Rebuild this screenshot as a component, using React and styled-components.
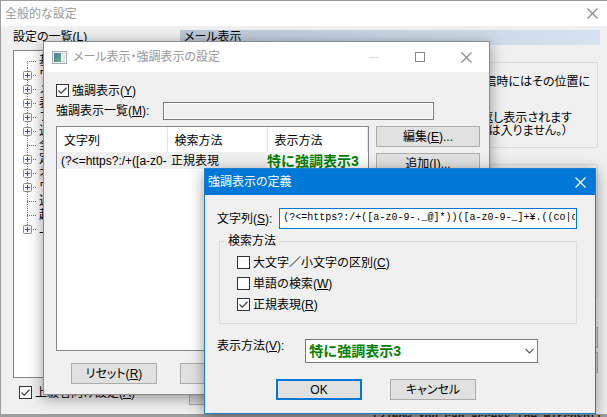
import React, { useState } from "react";

import styled, { createGlobalStyle } from "styled-components";

const GlobalStyle = createGlobalStyle`
  * {
    box-sizing: border-box;
  }

  html, body, #root {
    height: 100%;
  }

  body {
    margin: 0;
    overflow: hidden;
    font-family: "Liberation Sans", "Noto Sans CJK JP", sans-serif;
    font-size: 12px;
    line-height: 14px;
    color: #000;
  }

  button, input, select {
    font: inherit;
    color: inherit;
  }
`;

const Desktop = styled.div`
  position: relative;
  height: 100%;
  overflow: hidden;
  background: #9c9c9c;
`;

const EditorText = styled.div`
  position: absolute;
  left: 372px;
  bottom: -7px;
  font-family: "Liberation Mono", monospace;
  font-size: 11px;
  font-weight: bold;
  white-space: nowrap;
  color: #222;
`;

const Window = styled.section`
  position: absolute;
  display: flex;
  flex-direction: column;
  background: #f0f0f0;
  border: 1px solid ${(props) => (props.$active ? "#1a7fd0" : "#8c8c8c")};
  box-shadow: 0 3px 14px rgba(0, 0, 0, 0.4);
`;

const SettingsWindow = styled(Window)`
  top: 1px;
  left: 0;
  right: -4px;
  bottom: 2px;
  border-color: #a0a0a0;
  border-top: none;
  box-shadow: none;
`;

const HighlightWindow = styled(Window)`
  top: 41px;
  left: 43px;
  width: 447px;
`;

const DefinitionWindow = styled(Window)`
  top: 168px;
  left: 204px;
  width: 392px;
`;

const TitleBar = styled.header`
  display: flex;
  align-items: center;
  flex: none;
  height: ${(props) => props.$height}px;
  padding-left: ${(props) => props.$indent}px;
  background: ${(props) => (props.$active ? "#0078d7" : "#fff")};
  color: ${(props) => (props.$active ? "#fff" : "#999")};
`;

const Title = styled.h1`
  flex: 1;
  margin: 0;
  font-size: 12px;
  font-weight: normal;
  font-feature-settings: "palt";
  white-space: nowrap;
`;

const TitleButton = styled.button`
  display: flex;
  align-items: center;
  justify-content: center;
  width: ${(props) => props.$width || 46}px;
  height: 100%;
  padding: 0;
  border: none;
  background: none;
`;

const AppIcon = styled.svg`
  margin-right: 6px;
`;

const Label = styled.label`
  white-space: nowrap;
  font-feature-settings: "palt" ${(props) => (props.$kana ? 1 : 0)};
`;

const CheckRow = styled.label`
  display: flex;
  align-items: center;
  gap: 3px;
  height: 13px;
  white-space: nowrap;
`;

const CheckInput = styled.input`
  appearance: none;
  flex: none;
  width: 13px;
  height: 13px;
  margin: 0;
  border: 1px solid #333;
  background: #fff;

  &:checked {
    background: #fff
      url("data:image/svg+xml,%3Csvg xmlns='http://www.w3.org/2000/svg' viewBox='0 0 11 11'%3E%3Cpath d='M1.5 5.5l2.7 2.7L9.5 2.8' fill='none' stroke='%23444' stroke-width='1.3'/%3E%3C/svg%3E");
  }
`;

const PushButton = styled.button`
  width: ${(props) => props.$width || 86}px;
  height: 21px;
  padding: 0;
  border: ${(props) => (props.$primary ? "2px solid #0078d7" : "1px solid #adadad")};
  background: #e1e1e1;
  font-feature-settings: "palt";
  white-space: nowrap;
`;

/* outer settings window */

const SettingsBody = styled.div`
  display: flex;
  flex: 1;
  min-height: 0;
  padding: 4px 10px 9px 12px;
`;

const TreePane = styled.div`
  display: flex;
  flex-direction: column;
  width: 167px;
`;

const Tree = styled.ul`
  flex: 1;
  min-height: 0;
  margin: 6px 8px 8px 0;
  padding: 3px 0 0 9px;
  border: 1px solid #828790;
  background: #fff;
  list-style: none;
`;

const TreeItem = styled.li`
  display: flex;
  align-items: center;
  height: 14px;
  white-space: nowrap;
`;

const TreeText = styled.span`
  background: ${(props) => (props.$selected ? "#eee" : "none")};
`;

const TreeCheck = styled.div`
  padding: 0 0 6px 6px;
`;

const Page = styled.div`
  display: flex;
  flex-direction: column;
  flex: 1;
  min-width: 0;
`;

const PageTitle = styled.h2`
  flex: none;
  height: 15px;
  margin: 0 0 17px;
  padding-left: 4px;
  background: linear-gradient(to right, #bac8d7, #d5e3f0);
  font-size: 12px;
  font-weight: normal;
  font-feature-settings: "palt";
`;

const PageGroup = styled.div`
  flex: none;
  height: ${(props) => props.$height}px;
  margin: 0 2px 16px 0;
  padding: 12px 0 0;
  border: 1px solid #dcdcdc;
`;

const PageText = styled.p`
  height: 13px;
  margin: 0 ${(props) => props.$end}px ${(props) => props.$gap || 0}px 0;
  text-align: right;
  font-feature-settings: "palt";
`;

const PageButtons = styled.div`
  display: flex;
  flex-direction: column;
  align-items: flex-end;
  gap: 4px;
  margin: 14px 2px 0 0;
`;

const PageFooter = styled.div`
  margin-top: auto;
  padding-left: 9px;
`;

/* highlight list window */

const HighlightBody = styled.div`
  padding: 12px 9px 10px 12px;
`;

const ListNameRow = styled.div`
  display: flex;
  align-items: center;
  gap: 14px;
  margin: 5px 0 6px;
`;

const ListName = styled.input`
  width: 271px;
  height: 18px;
  padding: 0 3px;
  border: 1px solid #7a7a7a;
  background: #f0f0f0;
  box-shadow: inset 0 0 0 1px #fff;
`;

const ListRow = styled.div`
  display: flex;
  gap: 7px;
`;

const ListBox = styled.div`
  flex: 1;
  height: 225px;
  overflow: hidden;
  border: 1px solid #828790;
  background: #fff;
`;

const Table = styled.table`
  width: 310px;
  table-layout: fixed;
  border-collapse: collapse;
  white-space: nowrap;
`;

const HeadCell = styled.th`
  height: 25px;
  padding: 2px 0 0 7px;
  border-right: 1px solid #e5e5e5;
  font-weight: normal;
  text-align: left;
`;

const Cell = styled.td`
  height: 17px;
  padding: 0 0 0 4px;
  overflow: hidden;
  background: #f0f0f0;
`;

const GreenCell = styled(Cell)`
  padding-left: 0;
  font-size: 14px;
  font-weight: bold;
  color: #008000;
  background: #fff;
`;

const SideButtons = styled.div`
  display: flex;
  flex-direction: column;
  gap: 6px;
`;

const BottomButtons = styled.div`
  display: flex;
  gap: 23px;
  padding: 12px 0 0 15px;
`;

/* definition dialog */

const DefinitionBody = styled.form`
  display: flex;
  flex-direction: column;
  padding: 13px 18px 13px 12px;
`;

const FieldRow = styled.div`
  display: flex;
  align-items: ${(props) => (props.$top ? "flex-start" : "center")};
`;

const PatternInput = styled.input`
  flex: 1;
  min-width: 0;
  height: 21px;
  margin-left: 7px;
  padding: 0 1px 2px 3px;
  border: 1px solid #0078d7;
  outline: none;
  background: #fff;
  font-family: "Liberation Mono", monospace;
  font-size: 10px;
`;

const MethodGroup = styled.fieldset`
  display: flex;
  flex-direction: column;
  gap: 8px;
  margin: 5px 0 15px 2px;
  padding: 8px 17px 12px;
  border: 1px solid #dcdcdc;
`;

const Legend = styled.legend`
  margin-left: -11px;
  padding: 0 2px;
`;

const SelectWrap = styled.div`
  position: relative;
  margin-left: 21px;
`;

const StyleSelect = styled.select`
  appearance: none;
  width: 233px;
  height: 24px;
  padding: 0 20px 0 3px;
  border: 1px solid #7a7a7a;
  border-radius: 0;
  background: #fff;
  font-size: 14px;
  font-weight: bold;
  color: #008000;
`;

const SelectArrow = styled.svg`
  position: absolute;
  right: 4px;
  top: 9px;
  pointer-events: none;
`;

const DialogButtons = styled.div`
  display: flex;
  gap: 28px;
  padding: 16px 0 0 59px;
`;

const TREE = [
  { name: "基本設定" },
  { name: "ワンタッチ", open: true },
  { name: "メール", open: true },
  { name: "表示", open: true },
  { name: "フォルダ", open: true },
  { name: "送信", open: true },
  { name: "全般" },
  { name: "定型文", open: true },
  { name: "オプション", open: true, selected: true },
  { name: "ワープロ", open: true },
  { name: "迷惑メール" },
  { name: "起動" },
  { name: "上級者向け", open: true },
];

const CloseIcon = ({ color }) => (
  <svg width="11" height="11" viewBox="0 0 11 11">
    <path d="M.5.5l10 10M10.5.5l-10 10" stroke={color} strokeWidth="1.2" />
  </svg>
);

const TreeMark = ({ plus, first, last }) => (
  <svg width="16" height="14" viewBox="0 0 16 14">
    <path
      d={`M4.5 ${first ? 7 : 0}V${last ? 7 : 14}M4 7.5H14`}
      stroke="#777"
      strokeDasharray="1 1"
    />
    {plus && (
      <g>
        <rect x=".5" y="3.5" width="8" height="8" rx="1" fill="#f8f8f8" stroke="#8c8c8c" />
        <path d="M2 7.5h5M4.5 5v5" stroke="#3454a4" />
      </g>
    )}
  </svg>
);

function Settings() {
  const [advanced, setAdvanced] = useState(true);

  return (
    <SettingsWindow>
      <TitleBar $height={25} $indent={4}>
        <Title>全般的な設定</Title>
        <TitleButton $width={36} aria-label="閉じる">
          <CloseIcon color="#888" />
        </TitleButton>
      </TitleBar>
      <SettingsBody>
        <TreePane>
          <Label $kana>
            設定の一覧(<u>L</u>)
          </Label>
          <Tree>
            {TREE.map((item, i) => (
              <TreeItem key={i}>
                <TreeMark plus={item.open} first={i === 0} last={i === TREE.length - 1} />
                <TreeText $selected={item.selected}>{item.name}</TreeText>
              </TreeItem>
            ))}
          </Tree>
          <TreeCheck>
            <CheckRow>
              <CheckInput
                type="checkbox"
                checked={advanced}
                onChange={(e) => setAdvanced(e.target.checked)}
              />
              <span>
                上級者向け設定(<u>A</u>)
              </span>
            </CheckRow>
          </TreeCheck>
        </TreePane>
        <Page>
          <PageTitle>メール表示</PageTitle>
          <PageGroup $height={86}>
            <PageText $end={7} $gap={23}>受信時にはその位置に</PageText>
            <PageText $end={25}>繰り返し表示されます</PageText>
            <PageText $end={29}>は入りません。）</PageText>
          </PageGroup>
          <PageGroup $height={133} />
          <PageButtons>
            <PushButton aria-label="追加" />
            <PushButton aria-label="削除" />
          </PageButtons>
          <PageFooter>
            <PushButton>OK</PushButton>
          </PageFooter>
        </Page>
      </SettingsBody>
    </SettingsWindow>
  );
}

function HighlightList() {
  const [enabled, setEnabled] = useState(true);

  return (
    <HighlightWindow>
      <TitleBar $height={30} $indent={8}>
        <AppIcon width="15" height="13" viewBox="0 0 15 13">
          <defs>
            <linearGradient id="pane" x2="1" y2="1">
              <stop offset="0" stopColor="#5577a8" />
              <stop offset="1" stopColor="#58b878" />
            </linearGradient>
          </defs>
          <rect x=".5" y=".5" width="14" height="12" fill="#f4f4f4" stroke="#a5acb2" />
          <rect x="2" y="2" width="7" height="9" fill="url(#pane)" />
          <path d="M10 2.5h3M10 10.5h3" stroke="#c8d0d4" />
          <rect x="11" y="4" width="2" height="5" fill="#dde3e6" />
        </AppIcon>
        <Title>メール表示・強調表示の設定</Title>
        <TitleButton aria-label="最小化">
          <svg width="10" height="10" viewBox="0 0 10 10">
            <path d="M0 5.5h10" stroke="#ddd" />
          </svg>
        </TitleButton>
        <TitleButton aria-label="最大化">
          <svg width="10" height="10" viewBox="0 0 10 10">
            <rect x=".5" y=".5" width="9" height="9" fill="none" stroke="#888" />
          </svg>
        </TitleButton>
        <TitleButton aria-label="閉じる">
          <CloseIcon color="#888" />
        </TitleButton>
      </TitleBar>
      <HighlightBody>
        <CheckRow>
          <CheckInput
            type="checkbox"
            checked={enabled}
            onChange={(e) => setEnabled(e.target.checked)}
          />
          <span>
            強調表示(<u>Y</u>)
          </span>
        </CheckRow>
        <ListNameRow>
          <Label htmlFor="listName">
            強調表示一覧(<u>M</u>):
          </Label>
          <ListName id="listName" readOnly />
        </ListNameRow>
        <ListRow>
          <ListBox>
            <Table>
              <colgroup>
                <col width="110" />
                <col width="100" />
                <col width="100" />
              </colgroup>
              <thead>
                <tr>
                  <HeadCell>文字列</HeadCell>
                  <HeadCell>検索方法</HeadCell>
                  <HeadCell>表示方法</HeadCell>
                </tr>
              </thead>
              <tbody>
                <tr>
                  <Cell>(?&lt;=https?:/+([a-z0-</Cell>
                  <Cell>正規表現</Cell>
                  <GreenCell>特に強調表示3</GreenCell>
                </tr>
              </tbody>
            </Table>
          </ListBox>
          <SideButtons>
            <PushButton $width={104}>
              編集(<u>E</u>)...
            </PushButton>
            <PushButton $width={104}>
              追加(<u>I</u>)...
            </PushButton>
          </SideButtons>
        </ListRow>
        <BottomButtons>
          <PushButton>
            リセット(<u>R</u>)
          </PushButton>
          <PushButton>OK</PushButton>
        </BottomButtons>
      </HighlightBody>
    </HighlightWindow>
  );
}

function Definition() {
  const [pattern, setPattern] = useState(
    "(?<=https?:/+([a-z0-9-._@]*))([a-z0-9-_]+¥.((co|c"
  );
  const [matchCase, setMatchCase] = useState(false);
  const [word, setWord] = useState(false);
  const [regex, setRegex] = useState(true);

  return (
    <DefinitionWindow $active>
      <TitleBar $active $height={26} $indent={3}>
        <Title>強調表示の定義</Title>
        <TitleButton $width={30} aria-label="閉じる">
          <CloseIcon color="#fff" />
        </TitleButton>
      </TitleBar>
      <DefinitionBody onSubmit={(e) => e.preventDefault()}>
        <FieldRow>
          <Label htmlFor="pattern">
            文字列(<u>S</u>):
          </Label>
          <PatternInput
            id="pattern"
            value={pattern}
            onChange={(e) => setPattern(e.target.value)}
          />
        </FieldRow>
        <MethodGroup>
          <Legend>検索方法</Legend>
          <CheckRow>
            <CheckInput
              type="checkbox"
              checked={matchCase}
              onChange={(e) => setMatchCase(e.target.checked)}
            />
            <span>
              大文字／小文字の区別(<u>C</u>)
            </span>
          </CheckRow>
          <CheckRow>
            <CheckInput
              type="checkbox"
              checked={word}
              onChange={(e) => setWord(e.target.checked)}
            />
            <span>
              単語の検索(<u>W</u>)
            </span>
          </CheckRow>
          <CheckRow>
            <CheckInput
              type="checkbox"
              checked={regex}
              onChange={(e) => setRegex(e.target.checked)}
            />
            <span>
              正規表現(<u>R</u>)
            </span>
          </CheckRow>
        </MethodGroup>
        <FieldRow $top>
          <Label htmlFor="style">
            表示方法(<u>V</u>):
          </Label>
          <SelectWrap>
            <StyleSelect id="style">
              <option>特に強調表示3</option>
            </StyleSelect>
            <SelectArrow width="9" height="6" viewBox="0 0 9 6">
              <path d="M.5.8l4 4 4-4" fill="none" stroke="#555" strokeWidth="1.2" />
            </SelectArrow>
          </SelectWrap>
        </FieldRow>
        <DialogButtons>
          <PushButton $primary>OK</PushButton>
          <PushButton type="button">キャンセル</PushButton>
        </DialogButtons>
      </DefinitionBody>
    </DefinitionWindow>
  );
}

function App() {
  return (
    <Desktop>
      <GlobalStyle />
      <EditorText>[2]Now You can access the Mircosoft</EditorText>
      <Settings />
      <HighlightList />
      <Definition />
    </Desktop>
  );
}
export default App;
